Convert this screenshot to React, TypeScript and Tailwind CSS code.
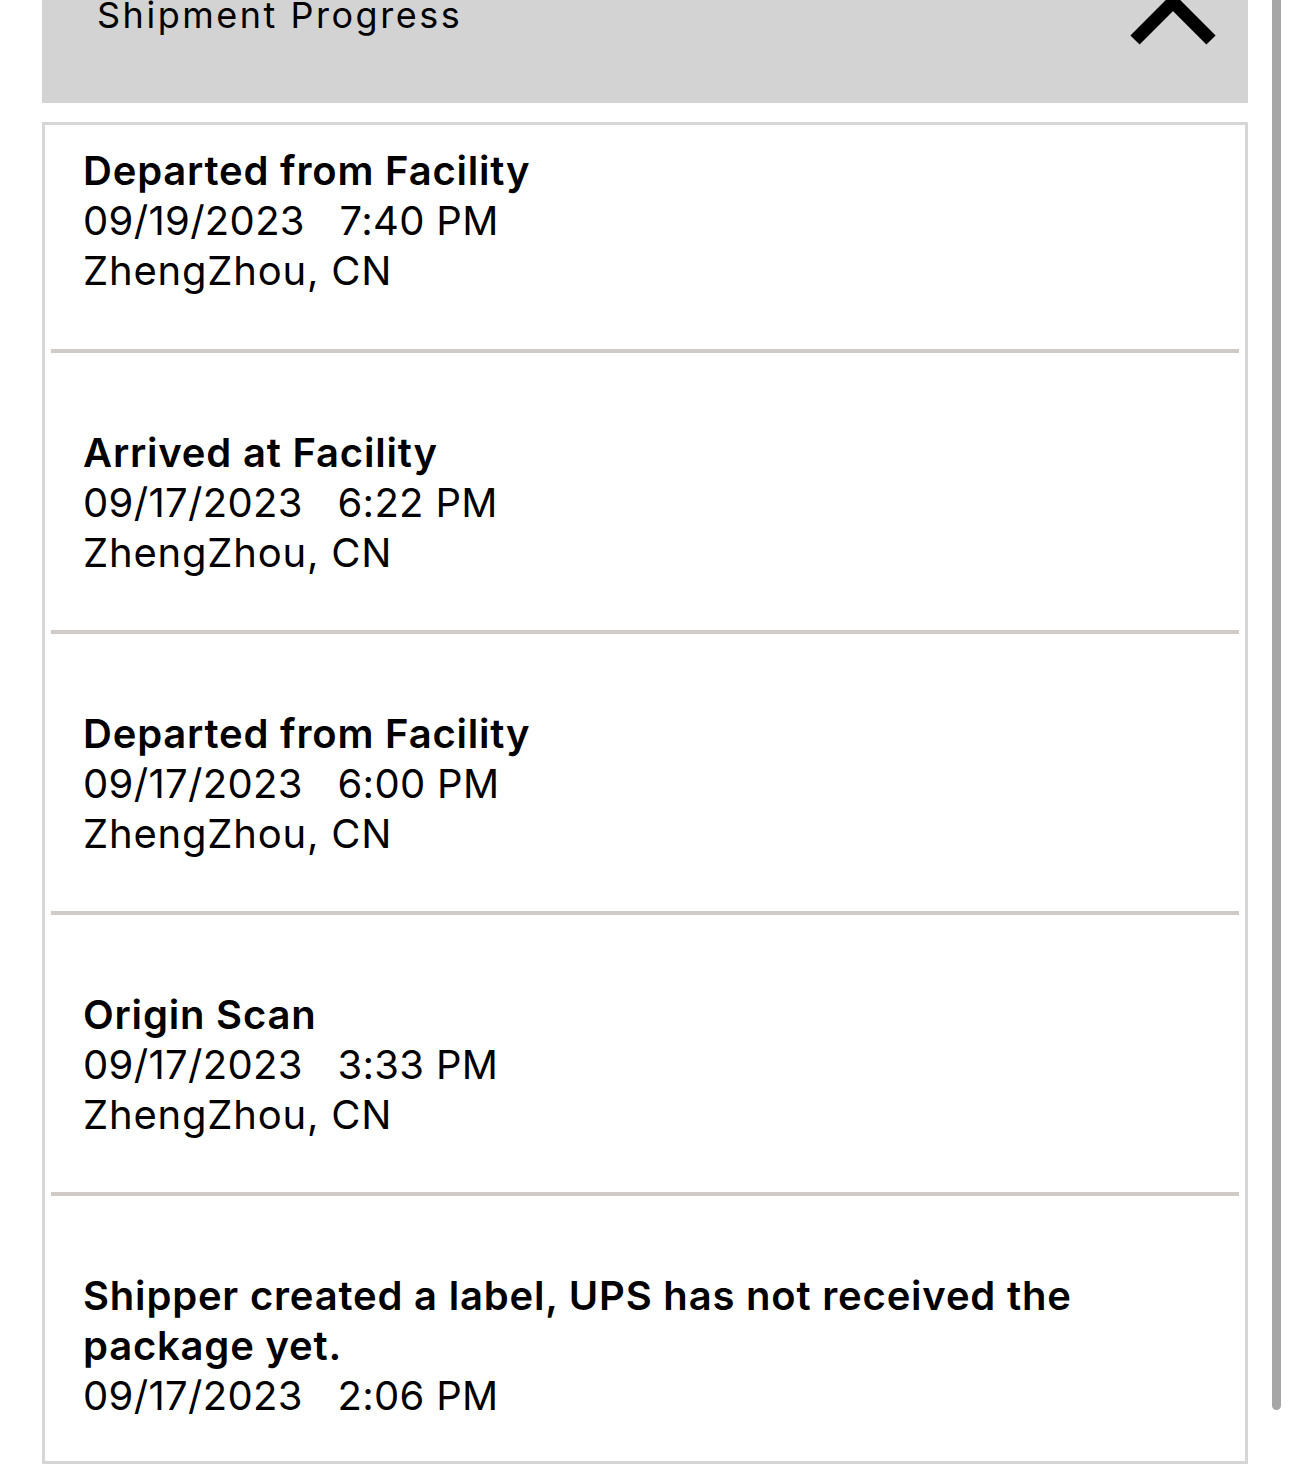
import React from "react";

type Event = { title: string; date: string; place?: string };

const events: Event[] = [
  { title: "Departed from Facility", date: "09/19/2023   7:40 PM", place: "ZhengZhou, CN" },
  { title: "Arrived at Facility", date: "09/17/2023   6:22 PM", place: "ZhengZhou, CN" },
  { title: "Departed from Facility", date: "09/17/2023   6:00 PM", place: "ZhengZhou, CN" },
  { title: "Origin Scan", date: "09/17/2023   3:33 PM", place: "ZhengZhou, CN" },
  { title: "Shipper created a label, UPS has not received the package yet.", date: "09/17/2023   2:06 PM" },
];

export default function App() {
  return (
    <div
      className="relative w-[1290px] h-[1475px] overflow-hidden bg-white text-black"
      style={{ fontFamily: "Inter, 'Liberation Sans', sans-serif" }}
    >
      <div className="pl-[42px] pr-[42px]">
        <div className="flex h-[103px] items-start justify-between bg-[#d3d3d3] pl-[55px] pr-[29px]">
          <div className="-mt-[10px] text-[36px] leading-[50px] font-normal tracking-[0.07em]">Shipment Progress</div>
          <svg width="92" height="50" viewBox="0 0 92 50" className="overflow-visible">
            <polyline points="8,40 46,2 84,40" fill="none" stroke="#000" strokeWidth="13" strokeLinecap="butt" strokeLinejoin="miter" />
          </svg>
        </div>
        <div className="mt-[19px] border-[3px] border-[#d6d6d6] pb-[40px]">
          {events.map((e, i) => (
            <div key={i}>
              {i > 0 && <div className="mx-[6px] h-[4px] bg-[#d0cbc7]" />}
              <div className={`${i === 0 ? "pt-[21px] pb-[53px]" : i === events.length - 1 ? "pt-[75px]" : "pt-[75px] pb-[52px]"} pl-[38px] pr-[110px] text-[40px] leading-[50px] tracking-[0.02em]`}>
                <div className="font-semibold">{e.title}</div>
                <div className="whitespace-pre tracking-[0.008em]">{e.date}</div>
                {e.place && <div>{e.place}</div>}
              </div>
            </div>
          ))}
        </div>
      </div>
      <div className="absolute left-[1272px] top-0 h-[1410px] w-[9px] rounded-b-full bg-[#a6a6a6]" />
    </div>
  );
}
